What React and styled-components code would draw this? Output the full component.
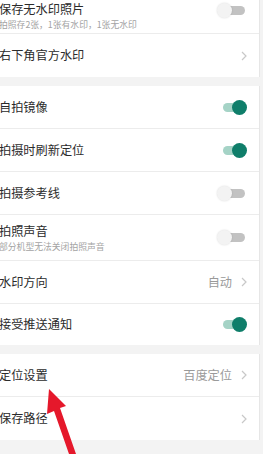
import styled, { createGlobalStyle } from "styled-components";

const Global = createGlobalStyle`
  html, body { margin: 0; padding: 0; }
  body {
    background: #f3f3f3;
    font-family: "Noto Sans CJK SC", "Noto Sans", sans-serif;
    overflow: hidden;
  }
`;

const Page = styled.div`
  position: relative;
  width: 263px;
  height: 454px;
  overflow: hidden;
  background: #f3f3f3;
  display: flex;
  flex-direction: column;
  gap: 9px;
`;

const Section = styled.div`
  width: 259px;
  background: #fff;
  border-right: 1px solid #e6e6e6;
  display: flex;
  flex-direction: column;
`;

const Row = styled.div`
  height: ${(p) => p.h || 43}px;
  box-sizing: border-box;
  display: flex;
  align-items: ${(p) => (p.top ? "flex-start" : "center")};
  justify-content: space-between;
  padding: ${(p) => (p.top ? "2px 12px 0 0" : "0 12px 0 0")};
  border-bottom: 1px solid #ececec;
  &:last-child { border-bottom: none; }
`;

const Texts = styled.div`
  display: flex;
  flex-direction: column;
  gap: 2px;
  margin-left: -1px;
`;

const Title = styled.div`
  font-size: 12.2px;
  line-height: 15px;
  color: #2b2b2b;
`;

const Sub = styled.div`
  font-size: 8.8px;
  line-height: 11px;
  color: #a3a3a3;
`;

const Right = styled.div`
  display: flex;
  align-items: center;
  gap: 9px;
  margin-top: ${(p) => p.mt || 0}px;
`;

const Value = styled.span`
  font-size: 12.2px;
  color: #9a9a9a;
`;

const Track = styled.div`
  position: relative;
  width: 22px;
  height: 9px;
  border-radius: 5px;
  margin-right: 2px;
  background: ${(p) => (p.on ? "#a5d3c6" : "#c2c2c2")};
`;

const Knob = styled.div`
  position: absolute;
  top: -3px;
  left: ${(p) => (p.on ? "9px" : "-6px")};
  width: 15px;
  height: 15px;
  border-radius: 50%;
  background: ${(p) => (p.on ? "#0f7e6a" : "#f3f3f3")};
  box-shadow: ${(p) => (p.on ? "none" : "0 0 2px rgba(0,0,0,0.15)")};
`;

const Arrow = styled.svg`
  position: absolute;
  left: 0;
  top: 0;
  pointer-events: none;
`;

function Toggle({ on }) {
  return (
    <Track on={on ? 1 : 0}>
      <Knob on={on ? 1 : 0} />
    </Track>
  );
}

function Chevron() {
  return (
    <svg width="6" height="10" viewBox="0 0 6 10">
      <path d="M1 1 L5 5 L1 9" fill="none" stroke="#c8c8c8" strokeWidth="1.2" />
    </svg>
  );
}

export default function App() {
  return (
    <>
      <Global />
      <Page>
        <Section>
          <Row h={34} top>
            <Texts>
              <Title>保存无水印照片</Title>
              <Sub>拍照存2张，1张有水印，1张无水印</Sub>
            </Texts>
            <Right mt={4}><Toggle /></Right>
          </Row>
          <Row>
            <Texts><Title>右下角官方水印</Title></Texts>
            <Right><Chevron /></Right>
          </Row>
        </Section>
        <Section>
          <Row>
            <Texts><Title>自拍镜像</Title></Texts>
            <Right><Toggle on /></Right>
          </Row>
          <Row>
            <Texts><Title>拍摄时刷新定位</Title></Texts>
            <Right><Toggle on /></Right>
          </Row>
          <Row>
            <Texts><Title>拍摄参考线</Title></Texts>
            <Right><Toggle /></Right>
          </Row>
          <Row h={46}>
            <Texts>
              <Title>拍照声音</Title>
              <Sub>部分机型无法关闭拍照声音</Sub>
            </Texts>
            <Right><Toggle /></Right>
          </Row>
          <Row>
            <Texts><Title>水印方向</Title></Texts>
            <Right><Value>自动</Value><Chevron /></Right>
          </Row>
          <Row h={41}>
            <Texts><Title>接受推送通知</Title></Texts>
            <Right><Toggle on /></Right>
          </Row>
        </Section>
        <Section>
          <Row>
            <Texts><Title>定位设置</Title></Texts>
            <Right><Value>百度定位</Value><Chevron /></Right>
          </Row>
          <Row>
            <Texts><Title>保存路径</Title></Texts>
            <Right><Chevron /></Right>
          </Row>
        </Section>
        <Arrow width="263" height="454" viewBox="0 0 263 454">
          <polygon
            points="49,389 66,406 60,408 76,454 69,454 54,411 47,414"
            fill="#e5182b"
          />
        </Arrow>
      </Page>
    </>
  );
}
